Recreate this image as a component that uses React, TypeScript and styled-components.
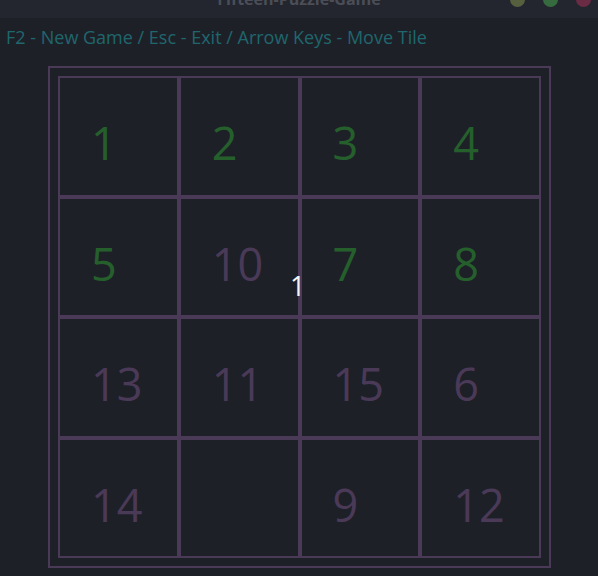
import React from "react";
import styled, { createGlobalStyle } from "styled-components";

const Global = createGlobalStyle`
  html, body { margin: 0; padding: 0; background: #1e2028; }
  body { width: 598px; height: 576px; overflow: hidden; font-family: "Open Sans", "Noto Sans", sans-serif; }
`;

const Page = styled.div`
  width: 598px;
  height: 576px;
  display: flex;
  flex-direction: column;
  background: #1e2028;
  overflow: hidden;
`;

const TitleBar = styled.div`
  height: 18px;
  flex: none;
  background: #23262e;
  position: relative;
  display: flex;
  justify-content: center;
  overflow: hidden;
`;

const Title = styled.div`
  font-family: "Open Sans", sans-serif;
  font-weight: 700;
  font-size: 16px;
  line-height: 16px;
  color: #4b4e57;
  margin-top: -9px;
`;

const Dots = styled.div`
  position: absolute;
  right: 7px;
  top: -8px;
  display: flex;
  gap: 18px;
`;

const Dot = styled.span<{ $c: string }>`
  width: 15px;
  height: 15px;
  border-radius: 50%;
  background: ${(p) => p.$c};
`;

const Help = styled.div`
  padding: 7px 0 0 6px;
  height: 41px;
  box-sizing: border-box;
  font-family: "Open Sans", sans-serif;
  font-size: 18px;
  line-height: 24px;
  color: #1f676d;
  white-space: nowrap;
`;

const Frame = styled.div`
  margin: 7px 0 0 48px;
  width: 503px;
  height: 502px;
  box-sizing: border-box;
  border: 2px solid #4a3a58;
  padding: 8px;
  position: relative;
`;

const Grid = styled.div`
  width: 483px;
  height: 482px;
  display: grid;
  grid-template-columns: repeat(4, 1fr);
  grid-template-rows: repeat(4, 1fr);
`;

const Cell = styled.div<{ $ok: boolean }>`
  box-sizing: border-box;
  border: 2px solid #4a3a58;
  display: flex;
  align-items: center;
  padding: 13px 0 0 31px;
  font-family: "Open Sans", sans-serif;
  font-size: 45px;
  color: ${(p) => (p.$ok ? "#25602c" : "#4a3a58")};
`;

const Floating = styled.div`
  position: absolute;
  left: 240px;
  top: 203px;
  font-family: "Open Sans", sans-serif;
  font-size: 27px;
  line-height: 30px;
  color: #f2f4f6;
`;

const tiles = [1, 2, 3, 4, 5, 10, 7, 8, 13, 11, 15, 6, 14, 0, 9, 12];

export default function App() {
  return (
    <Page>
      <Global />
      <TitleBar>
        <Title>Fifteen-Puzzle-Game</Title>
        <Dots>
          <Dot $c="#56603f" />
          <Dot $c="#356b3f" />
          <Dot $c="#6a2b45" />
        </Dots>
      </TitleBar>
      <Help>F2 - New Game / Esc - Exit / Arrow Keys - Move Tile</Help>
      <Frame>
        <Grid>
          {tiles.map((t, i) => (
            <Cell key={i} $ok={t === i + 1}>
              {t === 0 ? "" : t}
            </Cell>
          ))}
        </Grid>
        <Floating>1</Floating>
      </Frame>
    </Page>
  );
}
